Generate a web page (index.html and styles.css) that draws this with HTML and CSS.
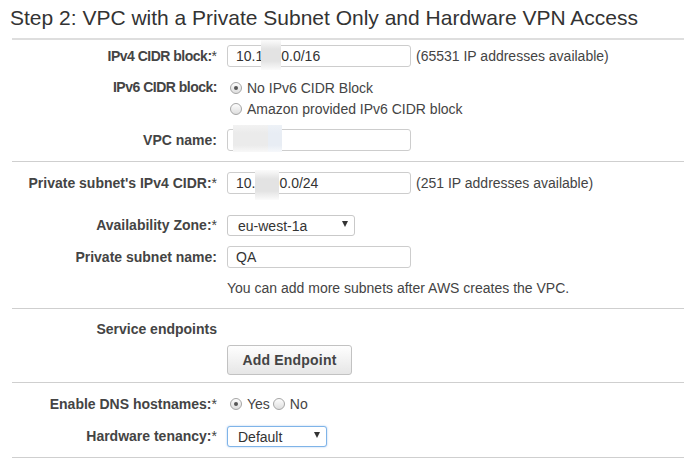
FILE: index.html
```html
<!DOCTYPE html>
<html>
<head>
<meta charset="utf-8">
<title>Step 2</title>
<link rel="stylesheet" href="styles.css">
</head>
<body>
<div class="page">
  <h1 class="title">Step 2: VPC with a Private Subnet Only and Hardware VPN Access</h1>

  <div class="section first">
    <div class="row">
      <div class="label narrow">IPv4 CIDR block:<span class="req">*</span></div>
      <div class="ctrl">
        <div class="field">10.1<span class="gap g18"></span>0.0/16<span class="blur b1"></span></div>
        <span class="note">(65531 IP addresses available)</span>
      </div>
    </div>
    <div class="row">
      <div class="label narrow lh21">IPv6 CIDR block:</div>
      <div class="ctrl col">
        <div class="opt"><span class="radio on"></span>No IPv6 CIDR Block</div>
        <div class="opt"><span class="radio"></span>Amazon provided IPv6 CIDR block</div>
      </div>
    </div>
    <div class="row">
      <div class="label">VPC name:</div>
      <div class="ctrl">
        <div class="field"><span class="blur b2"><span class="b2a"></span><span class="b2b"></span></span></div>
      </div>
    </div>
  </div>

  <div class="section">
    <div class="row mb10">
      <div class="label">Private subnet's IPv4 CIDR:<span class="req">*</span></div>
      <div class="ctrl">
        <div class="field">10.<span class="gap g24"></span>0.0/24<span class="blur b3"></span></div>
        <span class="note">(251 IP addresses available)</span>
      </div>
    </div>
    <div class="row">
      <div class="label">Availability Zone:<span class="req">*</span></div>
      <div class="ctrl">
        <div class="select az"><span>eu-west-1a</span><span class="arrow"></span></div>
      </div>
    </div>
    <div class="row">
      <div class="label">Private subnet name:</div>
      <div class="ctrl">
        <div class="field">QA</div>
      </div>
    </div>
    <div class="row">
      <div class="label lh20"></div>
      <div class="ctrl text">You can add more subnets after AWS creates the VPC.</div>
    </div>
  </div>

  <div class="section">
    <div class="row">
      <div class="label lh20">Service endpoints</div>
      <div class="ctrl"></div>
    </div>
    <div class="row btnrow">
      <div class="label"></div>
      <div class="ctrl"><button class="btn" type="button">Add Endpoint</button></div>
    </div>
  </div>

  <div class="section last">
    <div class="row">
      <div class="label">Enable DNS hostnames:<span class="req">*</span></div>
      <div class="ctrl">
        <div class="opt"><span class="radio on"></span>Yes</div>
        <div class="opt"><span class="radio"></span>No</div>
      </div>
    </div>
    <div class="row">
      <div class="label">Hardware tenancy:<span class="req">*</span></div>
      <div class="ctrl">
        <div class="select tenancy focus"><span>Default</span><span class="arrow"></span></div>
      </div>
    </div>
  </div>
</div>
</body>
</html>
```

FILE: styles.css
```css
html, body {
  margin: 0;
  padding: 0;
  background: #fff;
}
body {
  font-family: "Liberation Sans", Arial, sans-serif;
  font-size: 14px;
  color: #444;
}
.page {
  padding-left: 12px;
}
.title {
  margin: 0;
  padding: 6px 0 8px;
  font-size: 21px;
  line-height: 24px;
  font-weight: normal;
  color: #333;
  text-indent: -2px;
  border-bottom: 2px solid #dedede;
  white-space: nowrap;
}
.section {
  border-bottom: 1px solid #cfcfcf;
  padding: 5px 0;
}
.section.first {
  padding-top: 0;
}
.row {
  display: grid;
  grid-template-columns: 205px 1fr;
  column-gap: 10px;
  padding: 5px 0;
  align-items: start;
}
.row.mb10 {
  margin-bottom: 10px;
}
.row.btnrow {
  padding: 1px 0 2px;
}
.label {
  text-align: right;
  font-weight: bold;
  line-height: 22px;
  color: #444;
  white-space: nowrap;
}
.label.narrow {
  letter-spacing: -0.5px;
}
.label.lh21 {
  line-height: 21px;
}
.label.lh20 {
  line-height: 20px;
}
.req {
  font-weight: normal;
  letter-spacing: 0;
}
.ctrl {
  display: flex;
  align-items: center;
  min-height: 0;
}
.ctrl.col {
  flex-direction: column;
  align-items: flex-start;
}
.ctrl.text {
  line-height: 20px;
  color: #444;
}
.field {
  position: relative;
  box-sizing: border-box;
  width: 184px;
  height: 22px;
  border: 1px solid #cdcdcd;
  border-radius: 3px;
  padding: 0 8px;
  line-height: 20px;
  color: #333;
  white-space: nowrap;
}
.gap {
  display: inline-block;
}
.gap.g18 { width: 18px; }
.gap.g24 { width: 24px; }
.blur {
  position: absolute;
  background: linear-gradient(#fbfbfb, #e3e3e3 30%, #e3e3e3 70%, #fbfbfb);
}
.blur.b1 {
  left: 33px;
  top: -6px;
  width: 20px;
  height: 30px;
}
.blur.b2 {
  left: 5px;
  top: -5px;
  width: 49px;
  height: 27px;
  display: flex;
  background: none;
}
.b2a {
  width: 35px;
  background: linear-gradient(#f2f2f2, #ebebeb 30%, #ebebeb 75%, #f8f8f8);
}
.b2b {
  width: 14px;
  background: linear-gradient(#eef2f7, #e8edf4 30%, #e8edf4 75%, #f6f8fb);
}
.blur.b3 {
  left: 27px;
  top: -3px;
  width: 24px;
  height: 30px;
}
.note {
  margin-left: 5px;
  color: #444;
  white-space: nowrap;
}
.opt {
  display: flex;
  align-items: center;
  height: 21px;
  color: #444;
  white-space: nowrap;
}
.radio {
  position: relative;
  box-sizing: border-box;
  width: 12px;
  height: 12px;
  border-radius: 50%;
  border: 1px solid #a5a5a5;
  background: linear-gradient(#fdfdfd, #dedede);
  margin: 0 5px 0 3px;
  flex: none;
}
.radio.on::after {
  content: "";
  position: absolute;
  left: 3px;
  top: 3px;
  width: 4px;
  height: 4px;
  border-radius: 50%;
  background: #555;
}
.select {
  box-sizing: border-box;
  height: 21px;
  border: 1px solid #c9c9c9;
  border-radius: 3px;
  padding: 0 6px 0 10px;
  display: flex;
  align-items: center;
  justify-content: space-between;
  color: #333;
  background: #fff;
  margin-top: 1px;
}
.select.az {
  width: 128px;
}
.select.tenancy {
  width: 100px;
}
.select.focus {
  border-color: #7fb4e8;
  box-shadow: 0 0 2px rgba(102, 160, 230, 0.6);
}
.arrow {
  width: 0;
  height: 0;
  border-left: 3px solid transparent;
  border-right: 3px solid transparent;
  border-top: 6px solid #333;
  margin-top: -4px;
}
.btn {
  box-sizing: border-box;
  width: 125px;
  height: 30px;
  border: 1px solid #c2c2c2;
  border-radius: 3px;
  background: linear-gradient(#fefefe, #e6e6e6);
  font-family: "Liberation Sans", Arial, sans-serif;
  font-size: 14px;
  font-weight: bold;
  color: #444;
  padding: 0;
  letter-spacing: 0.2px;
}
```
